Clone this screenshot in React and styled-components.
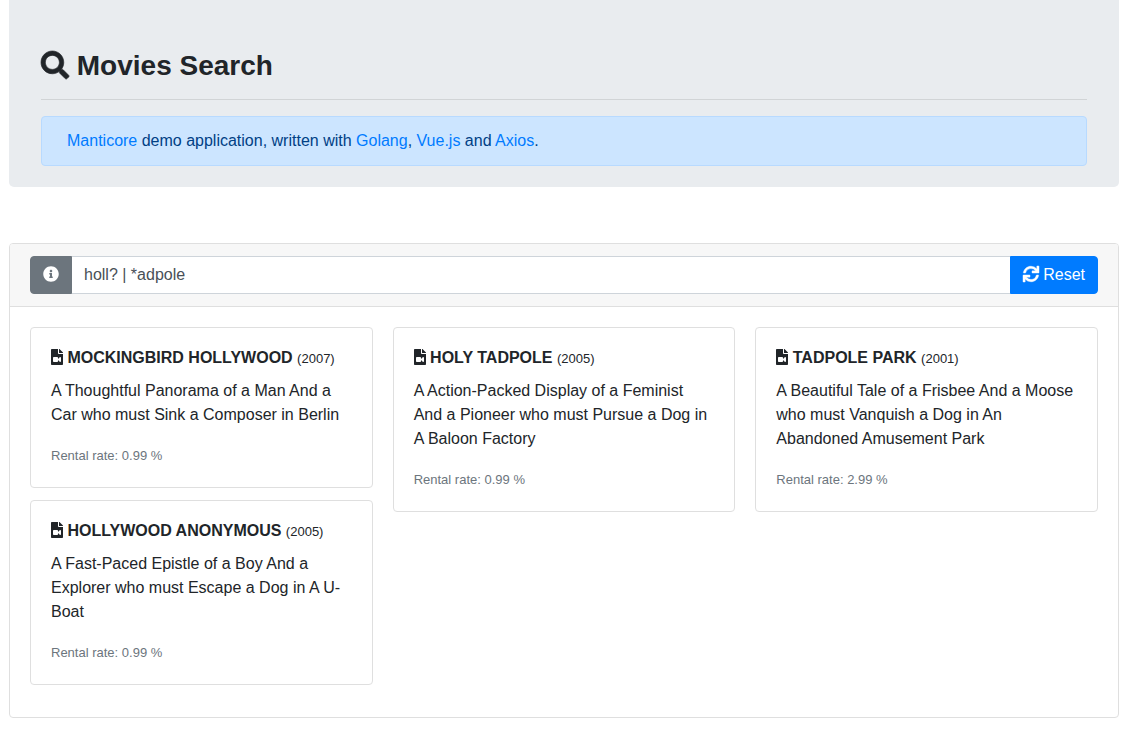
import React, { useState } from "react";
import styled, { createGlobalStyle } from "styled-components";
import { FaSearch, FaInfoCircle, FaSync, FaFileVideo } from "react-icons/fa";

const GlobalStyle = createGlobalStyle`
  *, *::before, *::after { box-sizing: border-box; }
  body {
    margin: 0;
    background: #fff;
    color: #212529;
    font-family: "Liberation Sans", Arial, sans-serif;
    font-size: 16px;
    line-height: 24px;
  }
`;

const Page = styled.div`
  max-width: 1130px;
  margin: 0 auto;
  padding: 0 11px 38px 9px;
`;

const Hero = styled.header`
  padding: 49px 32px 21px;
  margin-bottom: 56px;
  background: #e9ecef;
  border-radius: 0 0 5px 5px;
`;

const Title = styled.h1`
  margin: 0;
  font-size: 28px;
  line-height: 34px;
  font-weight: 700;
`;

const Divider = styled.hr`
  margin: 16px 0;
  border: 0;
  border-top: 1px solid rgba(0, 0, 0, 0.1);
`;

const Notice = styled.div`
  padding: 12px 25px;
  color: #004085;
  background: #cce5ff;
  border: 1px solid #b8daff;
  border-radius: 4px;
`;

const Link = styled.a`
  color: #007bff;
  text-decoration: none;
  &:hover { text-decoration: underline; }
`;

const Panel = styled.main`
  border: 1px solid #dfdfdf;
  border-radius: 4px;
`;

const SearchBar = styled.form`
  display: flex;
  padding: 12px 20px;
  background: #f7f7f7;
  border-bottom: 1px solid #dfdfdf;
  border-radius: 3px 3px 0 0;
`;

const BarButton = styled.button`
  flex: none;
  padding: 6px 12px;
  color: #fff;
  font: inherit;
  white-space: nowrap;
  background: ${(p) => p.$color};
  border: 1px solid ${(p) => p.$color};
  border-radius: ${(p) => (p.$side === "left" ? "4px 0 0 4px" : "0 4px 4px 0")};
  cursor: pointer;
`;

const SearchInput = styled.input`
  flex: 1;
  min-width: 0;
  padding: 6px 12px;
  color: #495057;
  font: inherit;
  background: #fff;
  border: solid #ced4da;
  border-width: 1px 0;
  border-radius: 0;
  outline: none;
`;

const Results = styled.div`
  padding: 20px 20px 32px;
  columns: 3;
  column-gap: 20px;
`;

const Card = styled.article`
  padding: 20px;
  margin-bottom: 12px;
  break-inside: avoid;
  background: #fff;
  border: 1px solid #dfdfdf;
  border-radius: 4px;
`;

const CardTitle = styled.h2`
  margin: 0 0 12px;
  font-size: 16px;
  line-height: 19px;
  font-weight: 700;
`;

const Small = styled.small`
  font-size: 13px;
  line-height: 1;
  font-weight: 400;
`;

const Description = styled.p`
  margin: 0 0 16px;
`;

const Rate = styled.p`
  margin: 0;
  color: #6c757d;
`;

const Glyph = styled.svg`
  width: ${(p) => p.$width || "1em"};
  height: 1em;
  vertical-align: -0.125em;
  stroke-width: ${(p) => p.$weight || 0};
  overflow: visible;
`;

const movies = [
  { title: "MOCKINGBIRD HOLLYWOOD", year: 2007, rate: "0.99", text: "A Thoughtful Panorama of a Man And a Car who must Sink a Composer in Berlin" },
  { title: "HOLLYWOOD ANONYMOUS", year: 2005, rate: "0.99", text: "A Fast-Paced Epistle of a Boy And a Explorer who must Escape a Dog in A U-Boat" },
  { title: "HOLY TADPOLE", year: 2005, rate: "0.99", text: "A Action-Packed Display of a Feminist And a Pioneer who must Pursue a Dog in A Baloon Factory" },
  { title: "TADPOLE PARK", year: 2001, rate: "2.99", text: "A Beautiful Tale of a Frisbee And a Moose who must Vanquish a Dog in An Abandoned Amusement Park" },
];

export default function App() {
  const [query, setQuery] = useState("holl? | *adpole");
  return (
    <>
      <GlobalStyle />
      <Page>
        <Hero>
          <Title><Glyph as={FaSearch} $weight={12} aria-hidden="true" /> Movies Search</Title>
          <Divider />
          <Notice>
            <Link href="#manticore">Manticore</Link> demo application, written with{" "}
            <Link href="#golang">Golang</Link>, <Link href="#vue">Vue.js</Link> and{" "}
            <Link href="#axios">Axios</Link>.
          </Notice>
        </Hero>
        <Panel>
          <SearchBar role="search" onSubmit={(e) => e.preventDefault()}>
            <BarButton type="button" $color="#6c757d" $side="left" aria-label="Search help">
              <Glyph as={FaInfoCircle} />
            </BarButton>
            <SearchInput
              type="text"
              aria-label="Search movies"
              value={query}
              onChange={(e) => setQuery(e.target.value)}
            />
            <BarButton type="button" $color="#007bff" $side="right" onClick={() => setQuery("")}>
              <Glyph as={FaSync} $weight={14} aria-hidden="true" /> Reset
            </BarButton>
          </SearchBar>
          <Results>
            {movies.map((m) => (
              <Card key={m.title}>
                <CardTitle>
                  <Glyph as={FaFileVideo} $width="12px" aria-hidden="true" /> {m.title}{" "}
                  <Small>({m.year})</Small>
                </CardTitle>
                <Description>{m.text}</Description>
                <Rate><Small>Rental rate: {m.rate} %</Small></Rate>
              </Card>
            ))}
          </Results>
        </Panel>
      </Page>
    </>
  );
}
